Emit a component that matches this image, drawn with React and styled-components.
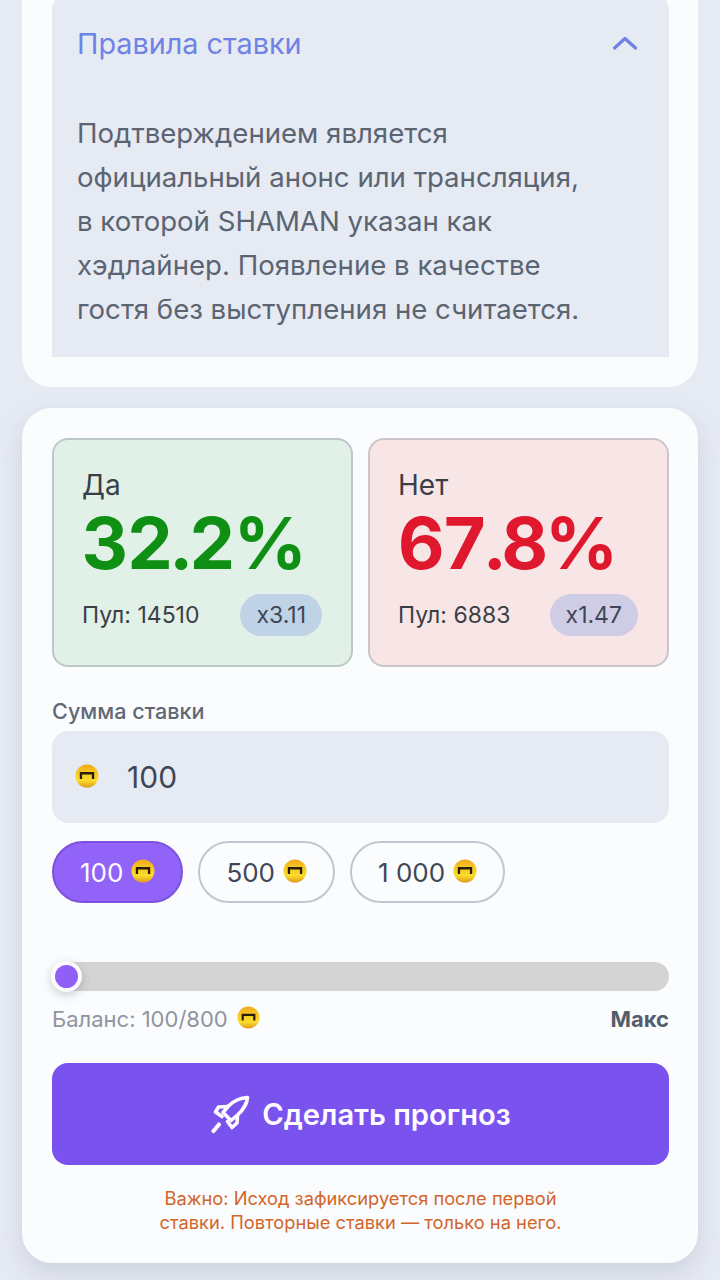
import React from 'react';
import styled, { createGlobalStyle } from 'styled-components';

const GlobalStyle = createGlobalStyle`
  html, body {
    margin: 0;
    padding: 0;
    background: #e6eaf3;
  }
  * {
    box-sizing: border-box;
  }
`;

function Coin({ size = 24 }) {
  const id = `coin-${size}`;
  return (
    <CoinSvg width={size} height={size} viewBox="0 0 24 24">
      <defs>
        <linearGradient id={id} x1="0" y1="0" x2="0" y2="1">
          <stop offset="0" stopColor="#f0a818" />
          <stop offset="0.3" stopColor="#f7c422" />
          <stop offset="0.7" stopColor="#fbdc2c" />
          <stop offset="1" stopColor="#dc9a1a" />
        </linearGradient>
      </defs>
      <circle cx="12" cy="12" r="11.5" fill={`url(#${id})`} />
      <path d="M4.8 8h14.4v7h-2.3v-4.6H7.1V15H4.8z" fill="#2b1d0c" />
    </CoinSvg>
  );
}

function RocketIcon() {
  return (
    <svg width="40" height="40" viewBox="0 0 40 40" fill="none" stroke="#fdfbff" strokeWidth="3.6" strokeLinejoin="round" strokeLinecap="round">
      <path d="M37.500 3.500C30 4 23.500 7 18.500 12L13 18.500 21 26.500 27.500 21C33 16 37 10 37.500 3.500Z" />
      <path d="M17.500 12.500 8.500 13 5.500 18 12 22.500" />
      <path d="M27.500 21.500 27 29 22 33.500 17.500 27.500" />
      <path d="M9 30.500 3.500 37" strokeWidth="4.2" />
    </svg>
  );
}

function OutcomeCard({ tone, title, percent, pool, rate }) {
  return (
    <Outcome $tone={tone}>
      <OutcomeTitle>{title}</OutcomeTitle>
      <Percent $tone={tone}>{percent}</Percent>
      <OutcomeFooter>
        <Pool>Пул: {pool}</Pool>
        <Rate $tone={tone}>{rate}</Rate>
      </OutcomeFooter>
    </Outcome>
  );
}

const amounts = ['100', '500', '1 000'];

export default function App() {
  return (
    <Page>
      <GlobalStyle />
      <RulesCard>
        <Accordion>
          <AccordionHead>
            <AccordionTitle>Правила ставки</AccordionTitle>
            <Chevron width="28" height="16" viewBox="0 0 28 16" fill="none">
              <path d="M3.500 13 14 3.500 24.500 13" stroke="#6f82e6" strokeWidth="3.2" strokeLinecap="round" strokeLinejoin="round" />
            </Chevron>
          </AccordionHead>
          <RulesText>
            Подтверждением является
            <br />
            официальный анонс или трансляция,
            <br />
            в которой SHAMAN указан как
            <br />
            хэдлайнер. Появление в качестве
            <br />
            гостя без выступления не считается.
          </RulesText>
        </Accordion>
      </RulesCard>

      <BetCard>
        <Outcomes>
          <OutcomeCard tone="yes" title="Да" percent="32.2%" pool="14510" rate="x3.11" />
          <OutcomeCard tone="no" title="Нет" percent="67.8%" pool="6883" rate="x1.47" />
        </Outcomes>

        <FieldLabel>Сумма ставки</FieldLabel>
        <AmountField>
          <Coin size={24} />
          <AmountValue>100</AmountValue>
        </AmountField>

        <Chips>
          {amounts.map((amount, i) => (
            <Chip key={amount} $active={i === 0}>
              {amount}
              <Coin size={24} />
            </Chip>
          ))}
        </Chips>

        <Track>
          <Thumb />
        </Track>

        <BalanceRow>
          <Balance>
            Баланс: 100/800
            <Coin size={23} />
          </Balance>
          <Max>Макс</Max>
        </BalanceRow>

        <SubmitButton>
          <RocketIcon />
          Сделать прогноз
        </SubmitButton>

        <Notice>
          Важно: Исход зафиксируется после первой
          <br />
          ставки. Повторные ставки — только на него.
        </Notice>
      </BetCard>
    </Page>
  );
}

const Page = styled.div`
  height: 1280px;
  overflow: hidden;
  padding: 0 22px;
  background: #e6eaf3;
  font-family: Inter, 'Noto Sans', sans-serif;
  display: flex;
  flex-direction: column;
  gap: 21px;
`;

const RulesCard = styled.section`
  margin-top: -36px;
  padding: 30px 29px 30px 30px;
  background: #fbfcfd;
  border-radius: 30px;
`;

const Accordion = styled.div`
  background: #e6eaf3;
  border-radius: 16px 16px 0 0;
`;

const AccordionHead = styled.div`
  height: 98px;
  padding: 0 30px 0 25px;
  display: flex;
  align-items: center;
  justify-content: space-between;
`;

const AccordionTitle = styled.div`
  font-size: 28.8px;
  color: #6f82e6;
`;

const Chevron = styled.svg`
  display: block;
`;

const RulesText = styled.p`
  margin: 0;
  padding: 19px 20px 26px 25px;
  font-size: 27.6px;
  line-height: 44px;
  color: #5b6472;
  white-space: nowrap;
`;

const BetCard = styled.section`
  height: 855px;
  flex: none;
  padding: 30px 29px 0 30px;
  background: #fbfcfd;
  border-radius: 30px;
  box-shadow: 0 10px 24px rgba(90, 100, 130, 0.18);
`;

const Outcomes = styled.div`
  display: grid;
  grid-template-columns: 301px 301px;
  gap: 15px;
`;

const Outcome = styled.div`
  height: 229px;
  padding: 28px 29px 0 28px;
  border: 2px solid ${({ $tone }) => ($tone === 'yes' ? '#bcc8c7' : '#cbc5c9')};
  border-radius: 16px;
  background: ${({ $tone }) => ($tone === 'yes' ? '#e2f1e7' : '#f8e5e5')};
`;

const OutcomeTitle = styled.div`
  font-size: 28px;
  line-height: 34px;
  color: #3a3f47;
`;

const Percent = styled.div`
  margin-top: 6px;
  font-size: 72px;
  line-height: 70px;
  font-weight: 700;
  font-variant-numeric: tabular-nums;
  letter-spacing: ${({ $tone }) => ($tone === 'yes' ? '-1.8px' : '-3px')};
  color: ${({ $tone }) => ($tone === 'yes' ? '#0f8f14' : '#e0182d')};
`;

const OutcomeFooter = styled.div`
  margin-top: 16px;
  display: flex;
  align-items: center;
  justify-content: space-between;
`;

const Pool = styled.div`
  font-size: 23px;
  color: #3a3f47;
`;

const Rate = styled.div`
  height: 42px;
  padding: 0 16px;
  display: flex;
  align-items: center;
  border-radius: 21px;
  font-size: 23px;
  color: #3f4756;
  background: ${({ $tone }) => ($tone === 'yes' ? '#bfd2e6' : '#cfcde6')};
`;

const FieldLabel = styled.div`
  margin-top: 31px;
  font-size: 21.6px;
  line-height: 27px;
  font-weight: 500;
  color: #5f6876;
`;

const AmountField = styled.div`
  margin-top: 6px;
  height: 92px;
  padding: 0 23px;
  display: flex;
  align-items: center;
  gap: 28px;
  background: #e6eaf3;
  border-radius: 16px;
`;

const AmountValue = styled.div`
  font-size: 30px;
  color: #3f4756;
`;

const Chips = styled.div`
  margin-top: 18px;
  display: flex;
  gap: 15px;
`;

const Chip = styled.div`
  height: 62px;
  padding: 0 26px;
  display: flex;
  align-items: center;
  gap: 8px;
  border-radius: 31px;
  font-size: 26px;
  color: ${({ $active }) => ($active ? '#fdfbff' : '#3f4756')};
  background: ${({ $active }) => ($active ? '#9163f9' : 'transparent')};
  border: 2px solid ${({ $active }) => ($active ? '#7c52dc' : '#c3c6d0')};
`;

const Track = styled.div`
  position: relative;
  margin-top: 59px;
  height: 29px;
  background: #d4d4d4;
  border-radius: 15px;
`;

const Thumb = styled.div`
  position: absolute;
  left: -1px;
  top: -1px;
  width: 31px;
  height: 31px;
  border-radius: 50%;
  border: 4px solid #fdfbff;
  background: #8f5ff8;
  box-shadow: 0 3px 10px rgba(60, 60, 80, 0.25);
`;

const BalanceRow = styled.div`
  margin-top: 12px;
  display: flex;
  align-items: center;
  justify-content: space-between;
`;

const Balance = styled.div`
  display: flex;
  align-items: center;
  gap: 9px;
  font-size: 22px;
  line-height: 32px;
  color: #9095a0;
`;

const Max = styled.div`
  font-size: 22px;
  font-weight: 700;
  color: #555d6b;
`;

const SubmitButton = styled.button`
  margin-top: 28px;
  width: 100%;
  height: 102px;
  border: 0;
  border-radius: 16px;
  display: flex;
  align-items: center;
  justify-content: center;
  gap: 12px;
  font-family: inherit;
  font-size: 29.2px;
  font-weight: 600;
  color: #fdfbff;
  background: #7a52ee;
`;

const Notice = styled.p`
  margin: 22px 0 0;
  font-size: 18.3px;
  line-height: 23.5px;
  text-align: center;
  color: #d2652a;
`;

const CoinSvg = styled.svg`
  display: block;
  flex: none;
  margin-top: -3px;
`;
